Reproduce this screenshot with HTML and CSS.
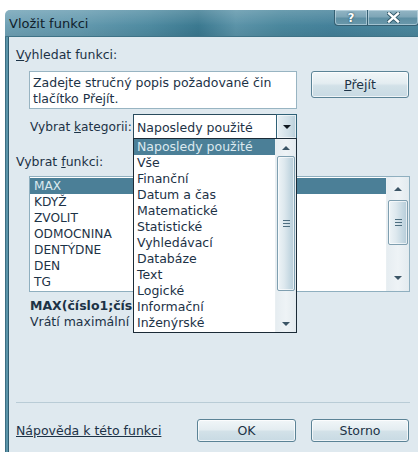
FILE: index.html
```html
<!DOCTYPE html>
<html lang="cs">
<head>
<meta charset="utf-8">
<title>Vložit funkci</title>
<link rel="stylesheet" href="styles.css">
</head>
<body>
<div class="win">
  <div class="titlebar">
    <span class="title">Vložit funkci</span>
    <div class="caption">
      <span class="cap-btn cap-help">?</span>
      <span class="cap-btn cap-close">
        <svg width="13" height="11" viewBox="0 0 13 11"><path d="M2 1.5 L11 9.5 M11 1.5 L2 9.5" stroke="#2d5566" stroke-width="4.2" stroke-linecap="square"/><path d="M2 1.5 L11 9.5 M11 1.5 L2 9.5" stroke="#ffffff" stroke-width="2.4" stroke-linecap="square"/></svg>
      </span>
    </div>
  </div>
  <div class="frame">
    <div class="client">
      <div class="lbl lbl-search"><u>V</u>yhledat funkci:</div>
      <div class="search-row">
        <div class="search">
          <div class="search-line">Zadejte stručný popis požadované činnosti a klepněte na</div>
          <div class="search-line">tlačítko Přejít.</div>
        </div>
        <button class="btn btn-go"><u>P</u>řejít</button>
      </div>

      <div class="cat-row">
        <span class="lbl lbl-cat">Vybrat <u>k</u>ategorii:</span>
        <div class="combo">
          <div class="combo-field">Naposledy použité</div>
          <div class="combo-arrow"><i class="tri-down dark"></i></div>
          <div class="drop">
            <ul class="drop-items">
              <li class="sel">Naposledy použité</li>
              <li>Vše</li>
              <li>Finanční</li>
              <li>Datum a čas</li>
              <li>Matematické</li>
              <li>Statistické</li>
              <li>Vyhledávací</li>
              <li>Databáze</li>
              <li>Text</li>
              <li>Logické</li>
              <li>Informační</li>
              <li>Inženýrské</li>
            </ul>
            <div class="vscroll vscroll-drop">
              <div class="sb-arrow"><i class="tri-up"></i></div>
              <div class="sb-thumb"><span class="grip"></span></div>
              <div class="sb-arrow"><i class="tri-down"></i></div>
            </div>
          </div>
        </div>
      </div>

      <div class="lbl lbl-func">Vybrat <u>f</u>unkci:</div>
      <div class="listbox">
        <ul class="func-items">
          <li class="sel">MAX</li>
          <li>KDYŽ</li>
          <li>ZVOLIT</li>
          <li>ODMOCNINA</li>
          <li>DENTÝDNE</li>
          <li>DEN</li>
          <li>TG</li>
        </ul>
        <div class="vscroll vscroll-list">
          <div class="sb-arrow"><i class="tri-up"></i></div>
          <div class="sb-thumb"><span class="grip"></span></div>
          <div class="sb-space"></div>
          <div class="sb-arrow"><i class="tri-down"></i></div>
        </div>
      </div>

      <div class="syntax">MAX(číslo1;číslo2;...)</div>
      <div class="desc">Vrátí maximální hodnotu v množině</div>

      <div class="sep"></div>

      <div class="footer">
        <a class="help-link" href="#">Nápověda k této funkci</a>
        <button class="btn btn-ok">OK</button>
        <button class="btn btn-cancel">Storno</button>
      </div>
    </div>
  </div>
</div>
</body>
</html>
```

FILE: styles.css
```css
* { box-sizing: border-box; }

html, body { margin: 0; padding: 0; }

body {
  width: 418px;
  height: 452px;
  overflow: hidden;
  background: #ffffff;
  font-family: "DejaVu Sans", "Verdana", sans-serif;
  font-size: 12.5px;
  color: #1c3246;
}

ul { margin: 0; padding: 0; list-style: none; }

/* window shell */
.win {
  margin: 10px 0 0 5px;
  width: 420px;
  height: 442px;
  display: flex;
  flex-direction: column;
}

.titlebar {
  height: 27px;
  display: flex;
  align-items: flex-start;
  background:
    linear-gradient(180deg, rgba(255,255,255,0.18) 0%, rgba(255,255,255,0.05) 45%, rgba(0,0,0,0) 60%, rgba(0,0,0,0.06) 100%),
    linear-gradient(90deg, #6fa1b5 0%, #6399ae 18%, #4f8ba1 34%, #3b7990 46%, #5b93a8 55%, #4a879d 66%, #44819a 78%, #4b879d 100%);
  border-bottom: 1px solid #3f7387;
  border-radius: 5px 0 0 0;
}

.title {
  font-family: "DejaVu Sans", sans-serif;
  font-size: 13px;
  line-height: 27px;
  padding-left: 4px;
  color: #10202b;
}

.caption {
  margin-left: auto;
  margin-right: 6px;
  display: flex;
}

.cap-btn {
  height: 16px;
  display: flex;
  align-items: center;
  justify-content: center;
  border: 1px solid #345f72;
  border-top: none;
  box-shadow: inset 0 0 0 1px rgba(210,230,238,0.55);
  background: linear-gradient(180deg, #93b5c4 0%, #7ea6b7 45%, #5e8fa3 55%, #6a98ab 100%);
}

.cap-help {
  width: 33px;
  border-radius: 0 0 0 4px;
  border-right: none;
  color: #ffffff;
  font-weight: bold;
  font-size: 12px;
  text-shadow: 0 0 2px #2d5566, 0 0 1px #2d5566;
}

.cap-close {
  width: 52px;
  border-radius: 0 0 4px 0;
}

.frame {
  flex: 1;
  display: flex;
  border-left: 1px solid #3d6e82;
  padding-left: 2px;
  background: #5a93a8;
}

.client {
  flex: 1;
  background: #dfe9ef;
  border-left: 1px solid #2f5e71;
  padding: 10px 0 0 7px;
  position: relative;
}

.lbl { line-height: 16px; white-space: nowrap; }

u { text-decoration: underline; text-underline-offset: 1px; }

/* search */
.search-row {
  display: flex;
  align-items: flex-start;
  margin-top: 8px;
}

.search {
  margin-left: 13px;
  width: 268px;
  height: 38px;
  background: #ffffff;
  border: 1px solid #98b4c2;
  padding: 3px 25px 0 3px;
  overflow: hidden;
  line-height: 16px;
}

.search-line { white-space: nowrap; overflow: hidden; }

.btn {
  font-family: "DejaVu Sans", sans-serif;
  font-size: 12.5px;
  color: #1c3246;
  background: linear-gradient(180deg, #f1f6f8 0%, #e4edf1 45%, #d2e1e8 55%, #c8dae3 100%);
  border: 1px solid #5b8396;
  border-radius: 3px;
  box-shadow: inset 0 0 0 1px rgba(255,255,255,0.7);
  padding: 0;
}

.btn-go {
  margin-left: 14px;
  width: 98px;
  height: 27px;
}

/* category combo */
.cat-row {
  display: flex;
  align-items: center;
  margin-top: 5px;
}

.lbl-cat {
  margin-left: 14px;
  width: 103px;
  font-size: 12.2px;
}

.combo {
  position: relative;
  width: 164px;
  height: 25px;
  display: flex;
  background: #ffffff;
  border: 1px solid #2a4c5e;
}

.combo-field {
  flex: 1;
  padding: 5px 0 0 3px;
  line-height: 16px;
  white-space: nowrap;
}

.combo-arrow {
  width: 21px;
  margin: -1px -1px -1px 0;
  border: 1px solid #2f6177;
  background: linear-gradient(90deg, #e9f1f5 0%, #d0e0e8 60%, #b9cfda 100%);
  box-shadow: inset 0 0 0 1px rgba(255,255,255,0.6);
  display: flex;
  align-items: center;
  justify-content: center;
}

.drop {
  position: absolute;
  top: 23px;
  left: -1px;
  width: 164px;
  height: 195px;
  background: #ffffff;
  border: 1px solid #1b2b37;
  display: flex;
  z-index: 5;
}

.drop-items {
  flex: 1;
  overflow: hidden;
}

.drop-items li {
  height: 16px;
  line-height: 16px;
  padding-left: 3px;
  white-space: nowrap;
}

.drop-items li.sel {
  background: #4b7f97;
  color: #dbe9ef;
}

/* scrollbars */
.vscroll {
  display: flex;
  flex-direction: column;
  background: linear-gradient(90deg, #e6edf1 0%, #eef3f6 50%, #e3ebef 100%);
  border-left: 1px solid #e9eff2;
}

.vscroll-drop { width: 21px; }
.vscroll-list { width: 23px; }

.sb-arrow {
  height: 17px;
  display: flex;
  align-items: center;
  justify-content: center;
}

.sb-thumb {
  flex: 0 0 auto;
  margin: 0 1px;
  border: 1px solid #7f9fb0;
  border-radius: 2px;
  background: linear-gradient(90deg, #eef4f7 0%, #dde8ee 40%, #c5d8e2 75%, #b6ccd8 100%);
  box-shadow: inset 0 0 0 1px rgba(255,255,255,0.65);
  display: flex;
  align-items: center;
  justify-content: center;
}

.vscroll-drop .sb-thumb { height: 135px; }
.vscroll-drop .sb-arrow:last-child { margin-top: auto; }

.vscroll-list .sb-arrow:first-child { height: 23px; }
.vscroll-list .sb-thumb { height: 45px; }
.vscroll-list .sb-space { flex: 1; }
.vscroll-list .sb-arrow:last-child { height: 26px; }

.grip {
  width: 7px;
  height: 7px;
  background:
    linear-gradient(#4d6e80, #4d6e80) 0 0 / 7px 1px no-repeat,
    linear-gradient(#4d6e80, #4d6e80) 0 3px / 7px 1px no-repeat,
    linear-gradient(#4d6e80, #4d6e80) 0 6px / 7px 1px no-repeat;
}

.tri-up, .tri-down {
  display: block;
  width: 0;
  height: 0;
  border-left: 4px solid transparent;
  border-right: 4px solid transparent;
}

.tri-up { border-bottom: 4px solid #3b5566; }
.tri-down { border-top: 4px solid #3b5566; }
.tri-down.dark { border-top-color: #101820; }

/* function list */
.lbl-func { margin-top: 15px; }

.listbox {
  margin: 6px 0 0 13px;
  width: 381px;
  height: 116px;
  background: #ffffff;
  border: 1px solid #8fafbf;
  display: flex;
}

.func-items {
  flex: 1;
  padding-top: 1px;
  overflow: hidden;
}

.func-items li {
  height: 16px;
  line-height: 16px;
  padding-left: 4px;
  font-size: 12.2px;
}

.func-items li.sel {
  background: #4b7f97;
  color: #dbe9ef;
}

.syntax {
  margin: 6px 0 0 14px;
  line-height: 16px;
  font-weight: bold;
  white-space: nowrap;
}

.desc {
  margin-left: 14px;
  line-height: 16px;
  white-space: nowrap;
}

.sep {
  margin-top: 72px;
  width: 394px;
  height: 1px;
  background: #b9ccd6;
}

.footer {
  display: flex;
  align-items: center;
  margin-top: 16px;
  height: 23px;
}

.help-link {
  color: #1c3246;
  text-decoration: underline;
  width: 181px;
  white-space: nowrap;
}

.btn-ok { width: 99px; height: 23px; }
.btn-cancel { width: 98px; height: 23px; margin-left: 15px; }
```
